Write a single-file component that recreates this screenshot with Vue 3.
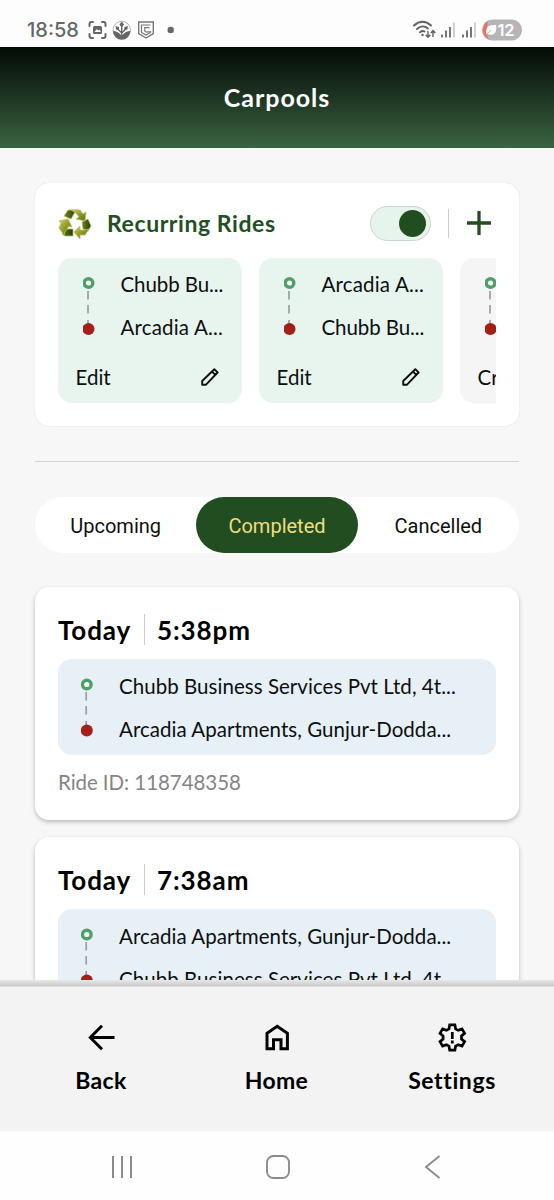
<script setup>
const rides = [
  { time: '5:38pm', from: 'Chubb Business Services Pvt Ltd, 4t...', to: 'Arcadia Apartments, Gunjur-Dodda...', id: '118748358' },
  { time: '7:38am', from: 'Arcadia Apartments, Gunjur-Dodda...', to: 'Chubb Business Services Pvt Ltd, 4t...', id: '118748357' },
]
const recurring = [
  { from: 'Chubb Bu...', to: 'Arcadia A...', action: 'Edit', on: true },
  { from: 'Arcadia A...', to: 'Chubb Bu...', action: 'Edit', on: true },
  { from: '', to: '', action: 'Create', on: false },
]
const cls = (s) => (s[0] === 'A' ? 'arc' : 'chubb')
</script>

<template>
  <div class="screen">
    <div class="status">
      <span class="clock">18:58</span>
      <svg class="s-left" width="90" height="24" viewBox="0 0 90 24">
        <g fill="none" stroke="#666" stroke-width="2" stroke-linecap="round">
          <path d="M1.500 7V5q0-2 2-2H5M14 3h1.500q2 0 2 2v2M17.500 15v2q0 2-2 2H14M5 19H3.500q-2 0-2-2v-2" />
        </g>
        <rect x="5" y="7" width="9" height="8" rx="1.500" fill="#666" />
        <path d="M6.500 13l2.300-3 1.500 1.500 1-1 1.700 2.500z" fill="#fff" />
        <circle cx="33.700" cy="11" r="8.700" fill="#fff" stroke="#aaa" stroke-width=".9" />
        <path d="M25 12q5 0 8.700 5 3.700-5 8.700-5a8.700 8.700 0 0 1-17.400 0z" fill="#666" />
        <path d="M33.700 17V7M33.700 14l-4-4M33.700 14l4-4" stroke="#666" stroke-width="1.400" />
        <path d="M33.700 2.500l2.300 3-2.300 3-2.300-3zM27.500 7l3.500 1v3l-3-.5zM39.900 7l-3.500 1v3l3-.5z" fill="#666" />
        <path d="M50.700 3h14.600v11.500L58 19l-7.300-4.500z" fill="none" stroke="#777" stroke-width="1.400" />
        <path d="M62.500 6h-9v7.500l4.500 2.500 4.500-2.500V12M61.500 8.700h-4.700v3.500l1.700 1 3-.5" fill="none" stroke="#777" stroke-width="1.200" />
        <circle cx="82.700" cy="11" r="3.200" fill="#666" />
      </svg>
      <svg class="s-right" width="112" height="26" viewBox="0 0 112 26">
        <g fill="none" stroke="#5f5f5f" stroke-width="1.900" stroke-linecap="round">
          <path d="M3 10.500Q11.500 3 20 10.500M6 14Q11.500 9 17 13.500M9 17.300Q11.500 15.300 13.500 16.500" />
        </g>
        <circle cx="11.500" cy="20" r="1.200" fill="#5f5f5f" />
        <path d="M17 16v6M14.700 19.800l2.300 2.500 2.300-2.500M22 22v-6M19.800 18l2.200-2.500 2.200 2.500" fill="none" stroke="#5f5f5f" stroke-width="1.400" />
        <path d="M31 19.500v3M35 15.500v7M39 12v10.500M52 19.500v3M56 15.500v7M60 12v10.500" stroke="#5f5f5f" stroke-width="1.700" />
        <path d="M43 7.500v15M64 7.500v15" stroke="#c9c9c9" stroke-width="1.700" />
        <rect x="71" y="4.500" width="40" height="21" rx="10.500" fill="#b5b5b5" />
        <path d="M77 6a10.500 10.500 0 0 0 0 18q-2-9 0-18z" fill="#ec7064" />
        <path d="M75 19q-.5-8 4.500-8.500l5.500-.7q1 5-1 8t-6 1.500z" fill="#fff" />
        <path d="M75.500 19l5-4" stroke="#d99" stroke-width=".9" />
        <text x="86.500" y="21" class="batt">12</text>
      </svg>
    </div>

    <header class="head"><h1>Carpools</h1></header>

    <main class="body">
      <section class="rec">
        <div class="rec-top">
          <svg class="recycle" width="34" height="30" viewBox="0 0 34 30">
            <defs>
              <linearGradient id="lime" x1="0" y1="0" x2="1" y2="1">
                <stop offset="0" stop-color="#d8cd63" /><stop offset=".5" stop-color="#8c9d20" /><stop offset="1" stop-color="#55730f" />
              </linearGradient>
              <linearGradient id="deep" x1="0" y1="0" x2="1" y2="0">
                <stop offset="0" stop-color="#6d8518" /><stop offset="1" stop-color="#173f0c" />
              </linearGradient>
            </defs>
            <g stroke="#c3b566" stroke-width=".8" stroke-linejoin="round">
              <path d="M6 7l4-6h10l-3 2-4 7z" fill="url(#deep)" />
              <path d="M13 1h9l3 4 3-2-1 9-9-2 3-2-3-4z" fill="url(#lime)" />
              <path d="M24 13l6-3 3 7-3 5-5-2z" fill="url(#deep)" />
              <path d="M31 20l-4 6h-5v4l-6-7 6-6v4h5z" fill="url(#lime)" />
              <path d="M15 20v7H7l-3-2 2-5z" fill="url(#deep)" />
              <path d="M6 26l-5-7 2-5-2-2 9-2 4 8-3-1-4 6z" fill="url(#lime)" />
            </g>
          </svg>
          <h2>Recurring Rides</h2>
          <span class="toggle"><i></i></span>
          <span class="vline"></span>
          <svg class="plus" width="24" height="24" viewBox="0 0 24 24"><path d="M12 0v24M0 12h24" stroke="#224f20" stroke-width="3.300" /></svg>
        </div>
        <div class="tiles">
          <article v-for="(r, i) in recurring" :key="i" class="tile" :class="{ off: !r.on }">
            <div class="route">
              <svg class="track" width="12" height="60" viewBox="0 0 12 60">
                <path d="M5 14v8.500M5 28v8.500M5 43v5" stroke="#989ea0" stroke-width="1.700" />
                <circle cx="5.500" cy="6" r="4.300" fill="#fff" stroke="#4da167" stroke-width="3.400" />
                <circle cx="5.500" cy="52" r="6" fill="#a31f17" />
              </svg>
              <div class="stops">
                <span :class="cls(r.from)">{{ r.from }}</span>
                <span :class="cls(r.to)">{{ r.to }}</span>
              </div>
            </div>
            <div class="action">
              <span>{{ r.action }}</span>
              <svg width="18" height="18" viewBox="0 0 18 18"><path d="M1.200 16.800V13L13.300 1.200l3.300 3.300L4.800 16.800zM11 3.500l3.300 3.300" fill="none" stroke="#111" stroke-width="1.900" stroke-linejoin="round" /></svg>
            </div>
          </article>
        </div>
      </section>

      <div class="rule"></div>

      <nav class="tabs">
        <span>Upcoming</span><span class="active">Completed</span><span>Cancelled</span>
      </nav>

      <article v-for="r in rides" :key="r.time" class="ride">
        <h3><span class="day">Today</span><i></i><span class="time">{{ r.time }}</span></h3>
        <div class="route box">
          <svg class="track" width="12" height="60" viewBox="0 0 12 60">
            <path d="M5.200 14v8.500M5.200 28v8.500M5.200 43v5" stroke="#989ea5" stroke-width="1.700" />
            <circle cx="5.800" cy="6.500" r="4.300" fill="#fff" stroke="#4da167" stroke-width="3.400" />
            <circle cx="5.800" cy="52.500" r="6" fill="#a31f17" />
          </svg>
          <div class="stops">
            <span>{{ r.from }}</span>
            <span>{{ r.to }}</span>
          </div>
        </div>
        <p>Ride ID: {{ r.id }}</p>
      </article>
    </main>

    <footer class="bottom">
      <div class="item">
        <svg width="28" height="30" viewBox="0 0 28 30"><path d="M27.500 14.500H4M15 2.800L3.300 14.500 15 26.200" fill="none" stroke="#000" stroke-width="3" /></svg>
        <span class="l-back">Back</span>
      </div>
      <div class="item">
        <svg width="28" height="30" viewBox="0 0 28 30"><path d="M4 25.800V10.300L14.200 3.300l10.200 7v15.500H18v-9h-7.500v9z" fill="none" stroke="#000" stroke-width="3" /></svg>
        <span class="l-home">Home</span>
      </div>
      <div class="item">
        <svg width="30" height="30" viewBox="0 0 30 30">
          <path d="M12.700 1.800h5.200l.7 4 2.600 1.500 3.800-1.400 2.600 4.500-3.100 2.600v3l3.100 2.600-2.600 4.500-3.800-1.400-2.600 1.500-.7 4h-5.200l-.7-4-2.600-1.500-3.800 1.400L3 18.600 6.100 16v-3L3 10.400l2.600-4.500 3.800 1.400L12 5.800z" fill="none" stroke="#000" stroke-width="2.700" />
          <path d="M15.300 9v7M15.300 17.500v3" stroke="#000" stroke-width="2.700" />
        </svg>
        <span class="l-set">Settings</span>
      </div>
    </footer>
    <div class="sysnav">
      <svg width="24" height="24" viewBox="0 0 24 24"><path d="M3 1v22M12 1v22M21 1v22" stroke="#8b8b8b" stroke-width="2" /></svg>
      <svg width="24" height="24" viewBox="0 0 24 24"><rect x="1" y="1" width="22" height="22" rx="6.500" fill="none" stroke="#8b8b8b" stroke-width="1.900" /></svg>
      <svg width="24" height="24" viewBox="0 0 24 24"><path d="M18.500 1L5 12l13.500 11" fill="none" stroke="#8b8b8b" stroke-width="1.900" /></svg>
    </div>
  </div>
</template>

<style>
body { margin: 0; background: #f7f7f7; }
</style>
<style scoped>
* { box-sizing: border-box; }
.screen { width: 554px; height: 1200px; overflow: hidden; display: flex; flex-direction: column; background: #f7f7f7; font-family: Lato, "Open Sans", sans-serif; color: #0c0f0e; }
svg { display: block; flex: none; }
span { white-space: nowrap; }
.status { height: 47px; flex: none; background: #fdfdfd; display: flex; align-items: flex-start; padding: 18px 31px 0 27px; }
.clock { font: 500 20px/24px Inter, sans-serif; color: #666; width: 61px; }
.s-left { margin-top: 1px; }
.s-right { margin: -3px 0 0 auto; }
.batt { font: 600 16.500px Inter, sans-serif; fill: #fff; letter-spacing: -.3px; }
.head { height: 101px; flex: none; background: linear-gradient(#040b06, #1b3120 45%, #3a6341); display: flex; align-items: center; justify-content: center; padding-bottom: 2px; }
h1 { margin: 0; font-size: 25px; font-weight: 700; color: #fff; letter-spacing: .95px; }
.body { height: 832px; flex: none; overflow: hidden; padding: 35px 35px 0; }
.rec { height: 243px; background: #fff; border-radius: 14px; padding: 23px 23px 0; box-shadow: 0 0 1px #ccc; }
.rec-top { height: 35px; display: flex; align-items: center; }
.recycle { margin-right: 15px; }
h2 { margin: -2px 0 0; font-size: 23px; color: #224f24; width: 263px; white-space: nowrap; letter-spacing: .58px; }
.toggle { width: 61px; height: 35px; flex: none; border: 1px solid #ccd5d0; border-radius: 18px; background: #e7f4ec; padding: 2.500px 4px 3px; display: flex; justify-content: flex-end; }
.toggle i { width: 27px; height: 27px; border-radius: 50%; background: #224d20; }
.vline { width: 1px; height: 29px; background: #ccc; margin: 0 18px 0 17px; }
.plus { margin: -1px 0 0 -.5px; }
.tiles { display: flex; gap: 17.500px; overflow: hidden; margin-top: 17px; }
.tile { width: 183.500px; height: 145px; flex: none; border-radius: 14px; background: #e8f5ee; padding: 5px 17.500px 0; }
.tile.off { background: #f5f5f5; }
.route { display: flex; font-size: 20.500px; }
.track { margin: 14px 26px 0 7px; }
.stops { display: flex; flex-direction: column; }
.stops span { height: 43px; line-height: 43px; }
.arc { letter-spacing: .18px; }
.chubb { letter-spacing: -.08px; }
.action { display: flex; justify-content: space-between; align-items: center; height: 30px; margin-top: 12.500px; font-size: 20.500px; padding-right: 5px; }
.rule { height: 1px; background: #d4d4d4; margin: 35px 0 34.500px; }
.tabs { height: 56px; background: #fff; border-radius: 28px; display: flex; font: 20px Roboto, sans-serif; }
.tabs span { flex: 1; display: flex; align-items: center; justify-content: center; padding-top: 2px; }
.tabs .active { background: #224d20; color: #efdd7d; border-radius: 28px; }
.ride { height: 232.500px; margin-top: 34.500px; background: #fff; border-radius: 14px; padding: 26px 23px 0; box-shadow: 0 2px 4px rgba(0,0,0,.25); }
.ride + .ride { margin-top: 17.500px; }
h3 { margin: 0; height: 32px; display: flex; align-items: center; font-size: 26px; color: #000; }
h3 span { padding-top: 1px; letter-spacing: .9px; }
h3 .day { width: 86px; }
h3 i { width: 1px; height: 31px; background: #ccc; margin-right: 12px; }
.box { height: 96px; background: #e7f0f6; border-radius: 14px; margin-top: 14px; padding: 5px 16px 0; }
.box .stops { padding-top: 1px; letter-spacing: .04px; }
p { margin: 12px 0 0; line-height: 30px; color: #858585; font-size: 20.500px; letter-spacing: -.06px; }
.bottom { height: 151px; flex: none; background: linear-gradient(#e8e8e8, #c9c9c9 6px, #f3f3f3 7px); padding-top: 43px; display: grid; grid-template-columns: 174px 177px 174px; padding-left: 14px; }
.item { display: flex; flex-direction: column; align-items: center; gap: 13px; font-size: 23px; line-height: 28px; font-weight: 700; color: #000; }
.l-back { letter-spacing: .35px; }
.l-home { letter-spacing: .3px; }
.l-set { letter-spacing: .6px; font-variant-ligatures: none; }
.sysnav { height: 69px; background: #fefefe; display: flex; justify-content: space-between; padding: 24px 109px 0 110px; }
</style>
